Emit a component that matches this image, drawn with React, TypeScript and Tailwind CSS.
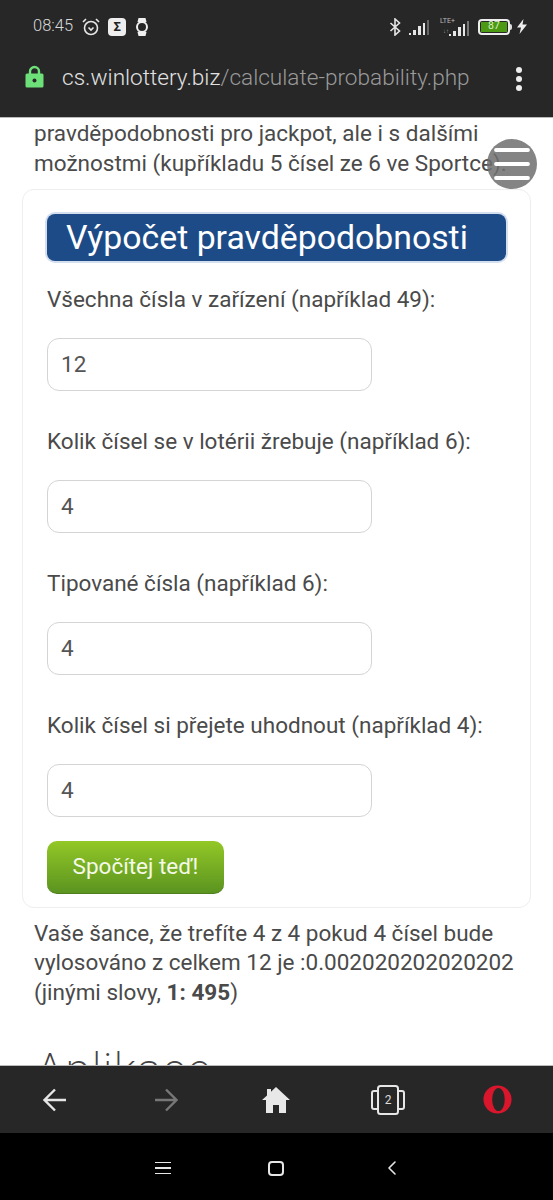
import { ChevronLeft, Menu } from 'lucide-react'

const fields = [
  { label: 'Všechna čísla v zařízení (například 49):', value: '12' },
  { label: 'Kolik čísel se v lotérii žrebuje (například 6):', value: '4' },
  { label: 'Tipované čísla (například 6):', value: '4' },
  { label: 'Kolik čísel si přejete uhodnout (například 4):', value: '4' },
]

function StatusBar() {
  return (
    <div className="flex h-[52px] items-center pl-[33px] pr-[26px] pt-[1px] text-[#d8d8d8]">
      <span className="text-[16.5px] font-light">08:45</span>
      <svg className="ml-[8px] h-[20px] w-[20px]" viewBox="0 0 20 20" fill="none" stroke="#e6e6e6" strokeWidth="1.6">
        <circle cx="10" cy="11" r="6.5" />
        <path d="M7.5 10.5l2.5 2.5 2.5-2.5M2 5l3-3M18 5l-3-3" />
      </svg>
      <span className="ml-[7px] flex h-[18px] w-[18px] items-center justify-center rounded-[4px] bg-[#eeeeee] text-[13px] font-bold leading-none text-[#222222]">Σ</span>
      <svg className="ml-[9px] h-[20px] w-[14px]" viewBox="0 0 14 20" fill="none">
        <path d="M3.5 1h7l1 4h-9zM3.5 19h7l1-4h-9z" fill="#f0f0f0" />
        <circle cx="7" cy="10" r="5" stroke="#f0f0f0" strokeWidth="2" />
      </svg>
      <svg className="ml-auto h-[18px] w-[13px]" viewBox="0 0 13 18" fill="none" stroke="#e6e6e6" strokeWidth="1.6">
        <path d="M1.5 5l9 8-4.5 4V1l4.5 4-9 8" />
      </svg>
      <svg className="ml-[6px] h-[16px] w-[22px]" viewBox="0 0 22 16" fill="#e6e6e6">
        <path d="M1 14h2v2H1zM5 11h3v5H5zM10 7h3v9h-3zM15 4h2v12h-2z" />
        <path d="M19 1h2v15h-2z" fill="#666666" />
      </svg>
      <span className="relative ml-[10px] h-[19px] w-[30px]">
        <span className="absolute left-0 top-0 text-[7px] leading-[8px] text-[#bbbbbb]">LTE+</span>
        <span className="absolute left-[3px] top-[10px] text-[6px] leading-[8px] text-[#999999]">↓↑</span>
        <svg className="absolute bottom-0 right-0 h-[16px] w-[22px]" viewBox="0 0 22 16" fill="#e6e6e6">
          <path d="M1 14h2v2H1zM5 11h3v5H5zM10 7h3v9h-3zM15 4h2v12h-2z" />
          <path d="M19 1h2v15h-2z" fill="#777777" />
        </svg>
      </span>
      <span className="ml-[8px] flex h-[16px] w-[32px] items-center justify-center rounded-[4px] border-2 border-[#eeeeee] p-[1px]">
        <span className="flex h-full w-full items-center justify-center bg-[#4c9a14] text-[10.5px] leading-none text-[#d8f0c0]">87</span>
      </span>
      <span className="h-[6px] w-[2px] rounded-r bg-[#dddddd]" />
      <svg className="ml-[5px] h-[15px] w-[10px]" viewBox="0 0 10 15" fill="#eeeeee">
        <path d="M6.5 0L0 8.5h4L2.5 15 10 5.5H5.5z" />
      </svg>
    </div>
  )
}

function AddressBar() {
  return (
    <div className="flex h-[66px] items-start border-b border-[#bbbbbb] pl-[25px] pr-[31px] pt-[9px]">
      <svg className="mt-[4px] h-[23px] w-[19px]" viewBox="0 0 19 23">
        <path d="M5 10V6.5a4.5 4.5 0 0 1 9 0V10" fill="none" stroke="#6ee07a" strokeWidth="2.4" />
        <path d="M2 8.5h15a1.5 1.5 0 0 1 1.5 1.5v11a1.5 1.5 0 0 1-1.5 1.5H2A1.5 1.5 0 0 1 .5 21V10A1.5 1.5 0 0 1 2 8.5z" fill="#6ee07a" />
        <circle cx="9.5" cy="15.5" r="2" fill="#272727" />
      </svg>
      <span className="ml-[18px] whitespace-nowrap text-[22.6px] font-light leading-[34px] text-[#e2e2e2]">
        cs.winlottery.biz<span className="text-[#9a9a9a]">/calculate-probability.php</span>
      </span>
      <span className="ml-auto mt-[6px] flex flex-col gap-[3px]">
        <span className="h-[6px] w-[6px] rounded-full bg-[#eeeeee]" />
        <span className="h-[6px] w-[6px] rounded-full bg-[#eeeeee]" />
        <span className="h-[6px] w-[6px] rounded-full bg-[#eeeeee]" />
      </span>
    </div>
  )
}

function Field({ label, value }: { label: string; value: string }) {
  return (
    <div>
      <div className="text-[22.5px] leading-[30px] text-[#4a4a4a]">{label}</div>
      <div className="mt-[24px] flex h-[53px] w-[325px] items-center rounded-[12px] border border-[#d4d4d4] bg-white px-[13px] text-[22.5px] text-[#555555]">
        {value}
      </div>
    </div>
  )
}

function BottomBar() {
  return (
    <div className="flex h-[68px] items-center border-t border-[#bbbbbb] bg-[#272727] pl-[43px]">
      <svg className="h-[24px] w-[24px]" viewBox="0 0 24 24" fill="none" stroke="#e6e6e6" strokeWidth="2.4">
        <path d="M23 12H2M12 1.5L1.5 12 12 22.5" />
      </svg>
      <svg className="ml-[87px] h-[24px] w-[24px]" viewBox="0 0 24 24" fill="none" stroke="#777777" strokeWidth="2.4">
        <path d="M1 12h21M12 1.5L22.5 12 12 22.5" />
      </svg>
      <svg className="ml-[84px] h-[26px] w-[28px]" viewBox="0 0 28 26" fill="#e8e8e8">
        <path d="M14 0L28 13h-4v13h-7v-8h-6v8H4V13H0L5 8.4V2h4v2.7z" />
      </svg>
      <span className="relative ml-[81px] flex h-[30px] w-[34px] items-center justify-center">
        <svg className="absolute inset-0 h-full w-full" viewBox="0 0 34 30" fill="none" stroke="#e6e6e6" strokeWidth="2">
          <rect x="7" y="1" width="20" height="28" rx="2.5" />
          <path d="M7 6H3a2 2 0 0 0-2 2v14a2 2 0 0 0 2 2h4M27 6h4a2 2 0 0 1 2 2v14a2 2 0 0 1-2 2h-4" />
        </svg>
        <span className="text-[12px] leading-none text-[#dddddd]">2</span>
      </span>
      <svg className="ml-[78px] h-[29px] w-[29px]" viewBox="0 0 30 30">
        <circle cx="15" cy="15" r="14.5" fill="#d9162c" />
        <ellipse cx="16" cy="15" rx="6.5" ry="12" fill="#272727" />
      </svg>
    </div>
  )
}

export default function App() {
  return (
    <div className="flex h-[1200px] w-[553px] flex-col overflow-hidden bg-white font-['Roboto',sans-serif]">
      <div className="bg-[#272727]">
        <StatusBar />
        <AddressBar />
      </div>

      <div className="relative flex-1 overflow-hidden">
        <div className="pl-[34px] text-[22.5px] leading-[30px] text-[#4a4a4a]">
          <p className="whitespace-nowrap">pravděpodobnosti pro jackpot, ale i s dalšími</p>
          <p className="whitespace-nowrap">možnostmi (kupříkladu 5 čísel ze 6 ve Sportce).</p>
        </div>

        <button className="absolute left-[487px] top-[21px] flex h-[50px] w-[50px] items-center justify-center rounded-full bg-[#6f6f6f]/85">
          <Menu className="h-[48px] w-[48px] text-white" strokeWidth={1.9} />
        </button>

        <div className="mx-[22px] mt-[11px] rounded-[12px] border border-[#eeeeee] px-[24px] pb-[13px] pt-[24px]">
          <h2 className="whitespace-nowrap rounded-[8px] bg-[#1d4b87] py-[1px] pl-[19px] text-[33.8px] leading-[45px] text-white ring-2 ring-[#d3dfef]">
            Výpočet pravděpodobnosti
          </h2>
          <div className="mt-[23px] flex flex-col gap-[35px]">
            {fields.map((f) => (
              <Field key={f.label} label={f.label} value={f.value} />
            ))}
          </div>
          <button className="mt-[24px] block h-[53px] w-[177px] rounded-[10px] border-b border-[#4d7f1c] bg-gradient-to-b from-[#93c826] to-[#5b9420] text-[22.5px] text-[#f4f9e8]">
            Spočítej teď!
          </button>
        </div>

        <div className="pl-[34px] pt-[11px] text-[22.5px] leading-[29.3px] text-[#4a4a4a]">
          <p className="whitespace-nowrap">Vaše šance, že trefíte 4 z 4 pokud 4 čísel bude</p>
          <p className="whitespace-nowrap">vylosováno z celkem 12 je :0.002020202020202</p>
          <p className="whitespace-nowrap">
            (jinými slovy, <b>1: 495</b>)
          </p>
        </div>

        <h2 className="pl-[36px] pt-[33px] text-[46px] font-extralight leading-[60px] tracking-[1.2px] text-[#444444]">Aplikace</h2>
      </div>

      <BottomBar />

      <div className="flex h-[67px] items-center bg-black pt-[3px] text-[#e6e6e6]">
        <span className="ml-[155px] flex w-[16px] flex-col gap-[4px]">
          <span className="h-[1.5px] bg-[#e6e6e6]" />
          <span className="h-[1.5px] bg-[#e6e6e6]" />
          <span className="h-[1.5px] bg-[#e6e6e6]" />
        </span>
        <span className="ml-[97px] h-[15px] w-[16px] rounded-[4px] border-2 border-[#e6e6e6]" />
        <ChevronLeft className="ml-[96px] h-[24px] w-[24px]" strokeWidth={1.6} />
      </div>
    </div>
  )
}
